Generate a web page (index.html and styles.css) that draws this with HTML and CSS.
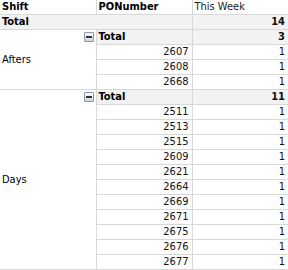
FILE: index.html
```html
<!DOCTYPE html>
<html>
<head>
<meta charset="utf-8">
<link rel="stylesheet" href="styles.css">
</head>
<body>
<table class="pivot">
  <colgroup><col class="c1"><col class="c2"><col class="c3"></colgroup>
  <tr class="head">
    <th>Shift</th>
    <th>PONumber</th>
    <th class="measure">This Week</th>
  </tr>
  <tr class="total grand">
    <td colspan="2" class="lbl">Total</td>
    <td class="num">14</td>
  </tr>
  <tr class="total">
    <td rowspan="4" class="group"><span class="toggle"></span><span class="gname">Afters</span></td>
    <td class="lbl">Total</td>
    <td class="num">3</td>
  </tr>
  <tr><td class="num">2607</td><td class="num">1</td></tr>
  <tr><td class="num">2608</td><td class="num">1</td></tr>
  <tr class="lastrow"><td class="num">2668</td><td class="num">1</td></tr>
  <tr class="total">
    <td rowspan="12" class="group"><span class="toggle"></span><span class="gname">Days</span></td>
    <td class="lbl">Total</td>
    <td class="num">11</td>
  </tr>
  <tr><td class="num">2511</td><td class="num">1</td></tr>
  <tr><td class="num">2513</td><td class="num">1</td></tr>
  <tr><td class="num">2515</td><td class="num">1</td></tr>
  <tr><td class="num">2609</td><td class="num">1</td></tr>
  <tr><td class="num">2621</td><td class="num">1</td></tr>
  <tr><td class="num">2664</td><td class="num">1</td></tr>
  <tr><td class="num">2669</td><td class="num">1</td></tr>
  <tr><td class="num">2671</td><td class="num">1</td></tr>
  <tr><td class="num">2675</td><td class="num">1</td></tr>
  <tr><td class="num">2676</td><td class="num">1</td></tr>
  <tr><td class="num">2677</td><td class="num">1</td></tr>
</table>
</body>
</html>
```
FILE: styles.css
```css
html, body {
  margin: 0;
  padding: 0;
  background: #ffffff;
}
.pivot {
  border-collapse: collapse;
  table-layout: fixed;
  width: 288px;
  font-family: "DejaVu Sans Condensed", "DejaVu Sans", sans-serif;
  font-size: 11px;
  color: #000;
}
.c1 { width: 96px; }
.c2 { width: 96px; }
.c3 { width: 96px; }
.pivot th, .pivot td {
  height: 14px;
  padding: 0 3px 0 2px;
  line-height: 14px;
  border-right: 1px solid #d8d8d8;
  border-bottom: 1px solid #d8d8d8;
  white-space: nowrap;
  overflow: hidden;
  box-sizing: content-box;
}
.pivot tr > :last-child {
  border-right: none;
}
.head th {
  text-align: left;
  font-weight: bold;
  background: #ffffff;
}
.head th.measure {
  font-weight: normal;
  color: #222;
}
.total td {
  background: #f2f2f2;
  font-weight: bold;
}
.total td.group {
  background: #ffffff;
  font-weight: normal;
}
.num {
  text-align: right;
  color: #111;
}
.total .num {
  font-family: "DejaVu Sans Condensed", "DejaVu Sans", sans-serif;
}
.lbl {
  text-align: left;
}
.group {
  position: relative;
  vertical-align: middle;
  text-align: left;
}
.gname {
  display: block;
}
.toggle {
  position: absolute;
  top: 2px;
  right: 2px;
  width: 8px;
  height: 8px;
  border: 1px solid #8a97a8;
  background: linear-gradient(#ffffff, #d0d6de);
  border-radius: 1px;
}
.toggle::after {
  content: "";
  position: absolute;
  left: 1px;
  right: 1px;
  top: 3px;
  height: 2px;
  background: #333;
}
```
